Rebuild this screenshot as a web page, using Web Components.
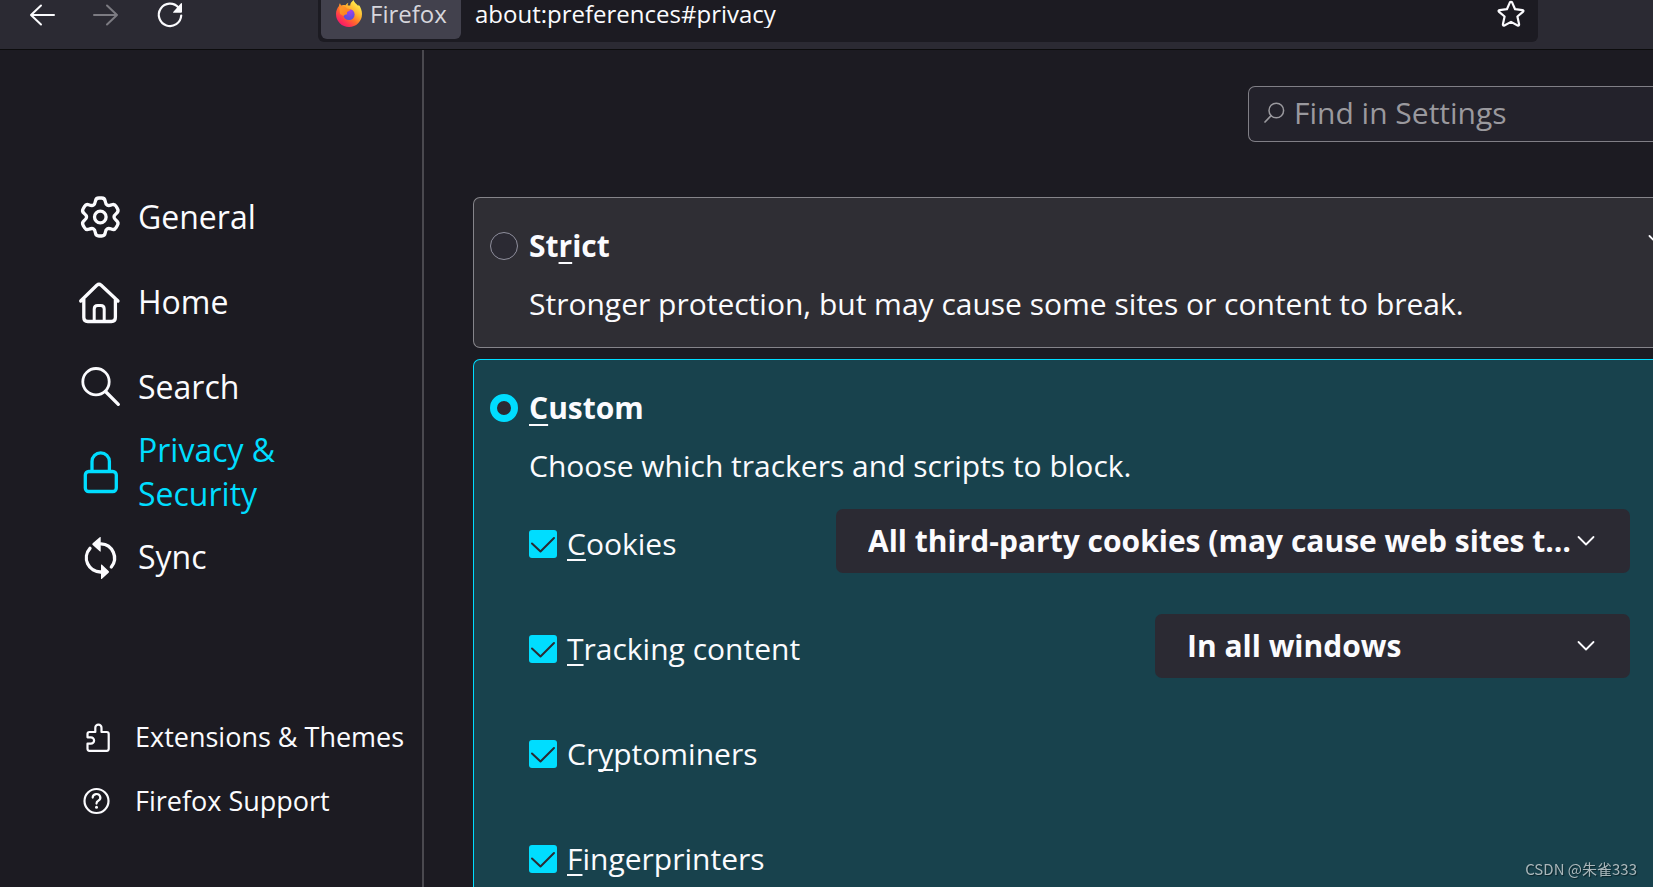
<!DOCTYPE html>
<html lang="en">
<head>
<meta charset="utf-8">
<title>Settings</title>
<style>
  html, body { margin: 0; height: 100%; }
  body {
    overflow: hidden;
    background: #1c1b22;
    color: #fbfbfe;
    font-family: "Open Sans", "Noto Sans", "Noto Sans CJK SC", sans-serif;
    font-size: 30px;
    line-height: 40px;
  }
</style>
</head>
<body>
<prefs-window></prefs-window>

<script>
/* Outline of a cog: trapezoid teeth with every corner rounded off. */
function cogPath(cx, cy, teeth) {
  const pts = [];
  for (let i = 0; i < teeth; i++) {
    const mid = -90 + i * 360 / teeth;
    for (const [r, d] of [[13.8, -23], [19.5, -13], [19.5, 13], [13.8, 23]]) {
      const a = (mid + d) * Math.PI / 180;
      pts.push([cx + r * Math.cos(a), cy + r * Math.sin(a)]);
    }
  }
  const towards = (p, q, d) => {
    const len = Math.hypot(q[0] - p[0], q[1] - p[1]);
    const t = Math.min(d / len, 0.5);
    return [p[0] + (q[0] - p[0]) * t, p[1] + (q[1] - p[1]) * t].map(n => n.toFixed(2)).join(' ');
  };
  return pts.map((p, i) => {
    const prev = pts[(i + pts.length - 1) % pts.length];
    const next = pts[(i + 1) % pts.length];
    return (i ? 'L' : 'M') + towards(p, prev, 3) + 'Q' + p.map(n => n.toFixed(2)).join(' ') + ' ' + towards(p, next, 3);
  }).join('') + 'Z';
}

const ICONS = {
  back: [28, '<path stroke-width="2" d="M26 14H3M13 4.500L3 14l10 9.500"/>'],
  forward: [28, '<path stroke-width="2" d="M2 14h23M15 4.500L25 14l-10 9.500"/>'],
  reload: [28, '<path stroke-width="2.200" d="M22.500 6.500A11.200 11.200 0 1 0 25.200 14.500"/><path fill="currentColor" stroke="none" d="M26 2.500v8.200q0 1-1 1h-7.500q-1 0-.3-.8l7.800-8.600q.9-.8 1 .2z"/>'],
  star: [28, '<path stroke-width="2.200" d="M14 1.800q.8 0 1.200.8l2.900 6.600 7.300.9q1.900.4.500 1.800l-5.500 4.600 1.700 7.700q.2 2-1.500 1.300L14 21.900l-6.600 3.600q-1.700.7-1.500-1.300l1.700-7.700-5.500-4.600q-1.400-1.400.5-1.800l7.300-.9 2.900-6.600q.4-.8 1.200-.8z"/>'],
  cog: [42, '<path d="' + cogPath(21.3, 21, 6) + '"/><circle cx="21.300" cy="21" r="5.800"/>'],
  home: [42, '<path d="M1.700 20L17.800 4.200q2.200-1.900 4.400 0L39 20M4.800 18v18.500q0 4 4 4h23.600q4 0 4-4V18"/><path stroke-width="3" d="M15.200 40V28q0-3.500 3.500-3.500h3q3.500 0 3.500 3.500v12"/>'],
  search: [42, '<circle stroke-width="2.800" cx="17" cy="15.700" r="13.200"/><path d="M26.500 25.500L39.300 38.300"/>'],
  lock: [42, '<rect x="6.300" y="20.500" width="31" height="20" rx="3.500"/><path d="M13 20v-9.500a8.700 8.700 0 0 1 17.400 0V20"/>'],
  sync: [42, '<path d="M22 7.800A14.200 14.200 0 0 1 32.300 31M11 12.300A14.200 14.200 0 0 0 22 36"/><path fill="currentColor" stroke="none" d="M21.700 1v14.700q-.6 0-1-.4l-7-6.200q-1-.9 0-1.800l7-6q.4-.4 1-.3zM22 28.500V43q.6.100 1-.3l6.600-5.900q1-.9 0-1.800L23 28.800q-.4-.4-1-.3z"/>'],
  puzzle: [32, '<path stroke-width="2.200" d="M8.500 11H14.300V6.800a3.100 3.100 0 0 1 6.200 0V11h5.200q2 0 2 2v14.800q0 2-2 2H8.500q-2 0-2-2v-5.100h3.400a3.200 3.200 0 0 0 0-6.400H6.500V13q0-2 2-2z"/>'],
  help: [32, '<circle stroke-width="2.200" cx="15.500" cy="16" r="12"/><path stroke-width="2.200" d="M11.700 12.600a3.800 3.600 0 1 1 5.600 3.200q-1.800 1-1.800 2.800"/><circle cx="15.500" cy="22.300" r="1.500" fill="currentColor" stroke="none"/>'],
  find: [22, '<circle stroke-width="1.500" cx="13.300" cy="8.500" r="7.300"/><path stroke-width="1.700" d="M8.100 13.700L2 20"/>'],
  chevron: [18, '<path stroke-width="1.800" d="M1.500 5L9 12.500 16.500 5"/>'],
  firefox: [28, `<defs>
      <linearGradient id="body" x1=".85" y1=".1" x2=".2" y2=".95"><stop offset="0" stop-color="#fff44f"/><stop offset=".35" stop-color="#ffb02e"/><stop offset=".6" stop-color="#ff6a2a"/><stop offset=".8" stop-color="#ff3750"/><stop offset="1" stop-color="#f5156c"/></linearGradient>
      <linearGradient id="head" x1="0" y1="0" x2="1" y2="1"><stop offset="0" stop-color="#ff9a2a"/><stop offset="1" stop-color="#ff7a1c"/></linearGradient>
      <radialGradient id="globe" cx=".6" cy=".2" r=".9"><stop offset="0" stop-color="#a240f0"/><stop offset=".6" stop-color="#6a4be0"/><stop offset="1" stop-color="#4a55d8"/></radialGradient>
    </defs>
    <path fill="url(#body)" stroke="none" d="M18.500 0c.8 2.600 3 4 4.800 6 .3-.7.300-1 .2-1.600 2.200 2.500 3.500 6 3.500 9.600a13 13 0 0 1-26 0c0-3.600 1.300-6 3-8 .1-1.300.4-2 1-2.800.3 1.300 1 2 1.700 2.200 1.300-.4 2.500-.4 3.700-.2.800-1.200 1.800-2 3-2.400-.6 1-.8 1.800-.6 2.800h2.500C14.800 3.600 16.500 2.200 18.500 0z"/>
    <circle fill="url(#globe)" stroke="none" cx="14" cy="14.500" r="5.600"/>
    <path fill="url(#head)" stroke="none" d="M4.500 8c2.500-2 5.500-2 7.400.5l3.600.8c.1 1.600-2.800 2-3.300 2.700-.4 1.300-.1 1.800.2 2.400-1.800-.2-2.900.6-3.600 1.600L5 14z"/>`]
};

/* Registers an element whose shadow root is filled from a template string. */
function define(name, render) {
  customElements.define(name, class extends HTMLElement {
    connectedCallback() {
      if (this.shadowRoot) return;
      const tpl = document.createElement('template');
      tpl.innerHTML = render(this);
      this.attachShadow({ mode: 'open' }).append(tpl.content.cloneNode(true));
    }
  });
}

define('ui-icon', el => {
  const [size, art] = ICONS[el.getAttribute('name')];
  return `<style>
    :host { display: block; flex: none; width: ${size}px; height: ${size}px; }
    svg { display: block; overflow: visible; fill: none; stroke: currentColor; stroke-width: 3.3; stroke-linecap: round; stroke-linejoin: round; }
  </style>
  <svg width="${size}" height="${size}" viewBox="0 0 ${size} ${size}" aria-hidden="true">${art}</svg>`;
});

define('tool-button', el => `<style>
    :host { display: block; }
    button { display: block; padding: 0; border: 0; background: none; color: #fbfbfe; }
    button:disabled { color: #7c7b82; }
  </style>
  <button type="button" aria-label="${el.getAttribute('label')}" ${el.hasAttribute('disabled') ? 'disabled' : ''}><ui-icon name="${el.getAttribute('icon')}"></ui-icon></button>`);

define('browser-toolbar', () => `<style>
    :host { display: flex; align-items: flex-start; height: 49px; border-bottom: 1px solid #0c0c0d; background: #2b2a33; font-size: 24px; line-height: 28px; }
    nav { display: flex; gap: 36px; width: 290px; flex: none; padding: 1px 0 0 28px; }
    .field { display: flex; flex: 1; height: 42px; margin-right: 115px; padding-right: 13px; box-sizing: border-box; border-radius: 0 0 6px 6px; background: #1c1b22; }
    .chip { display: flex; gap: 7px; flex: none; box-sizing: border-box; width: 140px; height: 39px; margin-left: 3px; padding-left: 14px; border-radius: 0 0 6px 6px; background: #42414d; color: #d6d6dc; }
    input { flex: 1; min-width: 0; height: 28px; margin: 0; padding: 0 0 0 14px; border: 0; outline: 0; background: none; color: #fbfbfe; font: inherit; }
  </style>
  <nav>
    <tool-button icon="back" label="Back"></tool-button>
    <tool-button icon="forward" label="Forward" disabled></tool-button>
    <tool-button icon="reload" label="Reload"></tool-button>
  </nav>
  <div class="field">
    <div class="chip"><ui-icon name="firefox"></ui-icon><span>Firefox</span></div>
    <input type="text" aria-label="Address" value="about:preferences#privacy">
    <tool-button icon="star" label="Bookmark this page"></tool-button>
  </div>`);

define('nav-item', el => `<style>
    :host { display: block; height: 85px; font-size: 32px; line-height: 44px; }
    :host([small]) { height: 64px; font-size: 27px; line-height: 36px; }
    a { display: flex; align-items: center; gap: 17px; height: 100%; padding-left: 79px; color: #fbfbfe; text-decoration: none; }
    :host([selected]) a { color: #00ddff; }
    :host([small]) a { gap: 22px; padding-left: 81px; white-space: nowrap; }
    span { max-width: 200px; }
    :host([small]) span { max-width: none; }
  </style>
  <a href="#${el.getAttribute('icon')}"><ui-icon name="${el.getAttribute('icon')}"></ui-icon><span><slot></slot></span></a>`);

define('prefs-sidebar', () => `<style>
    :host { display: block; flex: none; box-sizing: border-box; width: 424px; padding-top: 124px; border-right: 2px solid #4a494f; }
    footer { margin-top: 106px; }
  </style>
  <nav>
    <nav-item icon="cog">General</nav-item>
    <nav-item icon="home">Home</nav-item>
    <nav-item icon="search">Search</nav-item>
    <nav-item icon="lock" selected>Privacy &amp; Security</nav-item>
    <nav-item icon="sync">Sync</nav-item>
  </nav>
  <footer>
    <nav-item icon="puzzle" small>Extensions &amp; Themes</nav-item>
    <nav-item icon="help" small>Firefox Support</nav-item>
  </footer>`);

define('find-box', () => `<style>
    :host { display: flex; align-items: center; gap: 9px; box-sizing: border-box; width: 405px; height: 56px; padding: 0 0 2px 14px; border: 1px solid #807f86; border-right: 0; border-radius: 7px 0 0 7px; background: #23222b; color: #9a999e; }
    input { flex: 1; min-width: 0; padding: 0; border: 0; outline: 0; background: none; color: inherit; font: inherit; }
    input::placeholder { color: #9a999e; opacity: 1; }
  </style>
  <ui-icon name="find"></ui-icon>
  <input type="search" aria-label="Find in Settings" placeholder="Find in Settings">`);

define('protection-card', el => `<style>
    :host { display: block; padding: 28px 23px 23px 16px; border: 1px solid #85848a; border-right: 0; border-radius: 7px 0 0 7px; background: #2f2e34; }
    :host([checked]) { border-color: #00ddff; background: #18424d; }
    .head { display: flex; align-items: center; }
    input { appearance: none; flex: none; box-sizing: border-box; width: 28px; height: 28px; margin: 0 11px 0 0; border: 1px solid #8f8f9d; border-radius: 50%; background: #2b2a33; }
    input:checked { border: 7px solid #00ddff; }
    label { font-weight: 700; }
    ::slotted(u) { text-underline-offset: 5px; text-decoration-thickness: 2px; text-decoration-skip-ink: none; }
    button { margin: -12px -36px 0 auto; padding: 0; border: 0; background: none; color: #fbfbfe; }
    .body { padding: 18px 0 0 39px; }
  </style>
  <div class="head">
    <input type="radio" id="choice" ${el.hasAttribute('checked') ? 'checked' : ''}>
    <label for="choice"><slot name="a"></slot><slot name="key"></slot><slot name="b"></slot></label>
    ${el.hasAttribute('expander') ? '<button type="button" aria-label="Show details"><ui-icon name="chevron"></ui-icon></button>' : ''}
  </div>
  <div class="body"><slot></slot></div>`);

define('tracker-row', el => `<style>
    :host { display: flex; align-items: center; height: 105px; }
    .box { display: grid; flex: none; margin-right: 10px; }
    .box > * { grid-area: 1 / 1; }
    input { appearance: none; width: 28px; height: 28px; margin: 0; border-radius: 3px; background: #00ddff; }
    .box svg { pointer-events: none; z-index: 1; }
    .name { display: flex; align-items: center; flex: none; width: 307px; }
    label { white-space: nowrap; }
    ::slotted(u) { text-underline-offset: 4px; text-decoration-thickness: 2px; text-decoration-skip-ink: none; }
    .menu { display: grid; flex: 1; margin-bottom: 5px; }
    .menu > * { grid-area: 1 / 1; }
    .menu.short { flex: none; width: 475px; margin-left: auto; }
    select { appearance: none; width: 100%; min-width: 0; height: 64px; margin: 0; padding: 0 56px 0 32px; border: 0; border-radius: 7px; background: #2b2a33; color: #fbfbfe; font: inherit; font-weight: 700; }
    .menu ui-icon { align-self: center; justify-self: end; margin-right: 35px; pointer-events: none; }
  </style>
  <div class="name">
    <span class="box"><input type="checkbox" id="check" checked>
      <svg width="28" height="28" viewBox="0 0 28 28" fill="none" stroke="#2b2a33" stroke-width="2" stroke-linecap="round" stroke-linejoin="round" aria-hidden="true"><path d="M3 13.500l8.500 8L25 8"/></svg></span>
    <label for="check"><slot></slot></label>
  </div>
  ${el.hasAttribute('value') ? `<div class="menu ${el.hasAttribute('short') ? 'short' : ''}"><select aria-label="What to block"><option>${el.getAttribute('value')}</option></select><ui-icon name="chevron"></ui-icon></div>` : ''}`);

define('prefs-window', () => `<style>
    :host { display: flex; flex-direction: column; height: 100vh; }
    .content { display: flex; flex: 1; min-height: 0; }
    main { display: flex; flex-direction: column; flex: 1; min-width: 0; padding: 36px 0 0 49px; overflow: hidden; }
    find-box { flex: none; align-self: flex-end; margin-bottom: 55px; }
    protection-card { flex: none; margin-bottom: 11px; }
    p { margin: 0; }
    .rows { margin-top: 5px; }
    small { position: fixed; right: 16px; bottom: 7px; color: #a9b6ba; font-size: 15px; line-height: 22px; text-shadow: 1px 1px 1px #0b2329; font-family: "Noto Sans CJK SC", sans-serif; }
  </style>
  <browser-toolbar></browser-toolbar>
  <div class="content">
    <prefs-sidebar></prefs-sidebar>
    <main>
      <find-box></find-box>
      <protection-card expander>
        <span slot="a">St</span><u slot="key">r</u><span slot="b">ict</span>
        <p>Stronger protection, but may cause some sites or content to break.</p>
      </protection-card>
      <protection-card checked>
        <u slot="key">C</u><span slot="b">ustom</span>
        <p>Choose which trackers and scripts to block.</p>
        <div class="rows">
          <tracker-row value="All third-party cookies (may cause web sites t…"><u>C</u>ookies</tracker-row>
          <tracker-row value="In all windows" short><u>T</u>racking content</tracker-row>
          <tracker-row>Cr<u>y</u>ptominers</tracker-row>
          <tracker-row><u>F</u>ingerprinters</tracker-row>
        </div>
      </protection-card>
    </main>
  </div>
  <small>CSDN @朱雀333</small>`);
</script>
</body>
</html>
